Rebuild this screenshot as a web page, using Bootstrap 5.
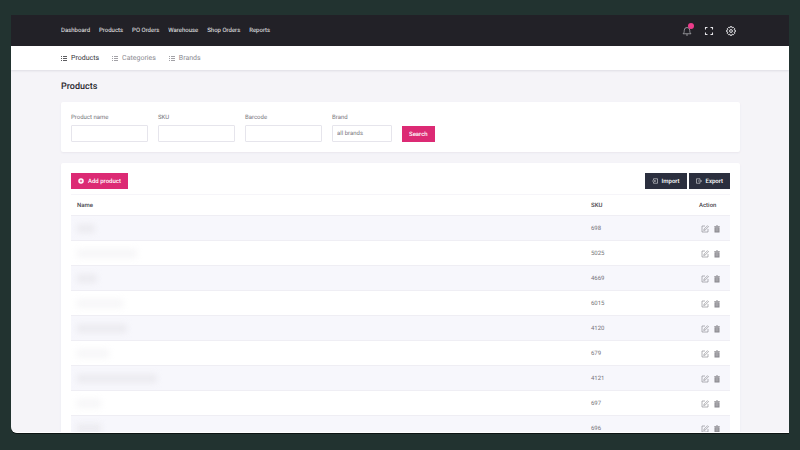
<!DOCTYPE html>
<html lang="en">
<head>
<meta charset="utf-8">
<meta name="viewport" content="width=device-width, initial-scale=1">
<title>Products</title>
<link href="https://cdn.jsdelivr.net/npm/bootstrap@5.3.0/dist/css/bootstrap.min.css" rel="stylesheet">
<style>
:root{--ink:#222127;--pink:#dc2a74;--slate:#2b2f3e;--line:#e6e5ec}
body{background:#223330;font-family:Roboto,"Liberation Sans",sans-serif;font-size:6px;line-height:12px;color:#77767c;padding:15px 11px 17px;text-rendering:geometricPrecision}
button,input,select{text-rendering:inherit}
.window{background:#f5f4f8;border-bottom:1px solid #fff;border-bottom-left-radius:6px;box-shadow:0 1px 0 #0c1413}
.gutter{padding-left:50px;padding-right:49px}
.topbar{background:var(--ink);height:31px;--bs-navbar-padding-y:0}
.topbar .nav{gap:9px;--bs-nav-link-font-size:6px}
.topbar .nav-link{padding:0;color:#f0f0f2;line-height:11px}
.tools{gap:12px;padding-right:4px}
.tools .btn{color:#e5e5e9;width:10px;height:10px}
.tools svg{width:10px;height:10px}
.btn{--bs-btn-padding-x:0;--bs-btn-padding-y:0;--bs-btn-border-width:0;--bs-btn-border-radius:0;--bs-btn-font-size:6px;--bs-btn-line-height:11px;--bs-btn-font-weight:500}
.dot{position:absolute;left:6px;top:-3px;width:6px;height:6px;background:#ec3c8b;border-radius:50%}
.subnav{height:24px;background:#fff;box-shadow:0 1px 2px #dddce4;gap:13px;--bs-nav-link-font-size:7px}
.subnav .nav-link{padding:0;gap:4px;color:#8b8a91;line-height:10px}
.subnav .nav-link.active{color:#343339}
.subnav svg{width:6px;height:6px}
.page-title{font-size:9px;line-height:12px;font-weight:500;color:#29282e;margin:11px 0 9px}
.panel{--bs-card-border-width:0;--bs-card-border-radius:2px;--bs-card-bg:#fff;box-shadow:0 1px 2px #e9e7ee;padding:10px}
.filters{gap:10px}
.field{width:77px}
.field.brand{width:60px}
.form-label{font-size:6px;line-height:12px;margin-bottom:1px}
.form-control,.form-select{height:17px;min-height:17px;font-size:6px;line-height:9px;padding:3px 4px;border:1px solid var(--line);border-radius:1px;background-image:none;color:#77767c}
.btn-pink{--bs-btn-bg:var(--pink);--bs-btn-color:#fff;--bs-btn-hover-bg:#c52065;--bs-btn-hover-color:#fff;height:16px;padding:0 7px}
.btn-slate{--bs-btn-bg:var(--slate);--bs-btn-color:#fff;--bs-btn-hover-bg:#1d202b;--bs-btn-hover-color:#fff;height:16px;padding:0 7px}
.btn-pink svg,.btn-slate svg{width:6px;height:6px}
.goods-panel{margin-top:11px}
.pair{gap:2px}
.goods{--bs-table-border-color:#efeef4;--bs-table-color:#77767c;--bs-table-striped-color:#77767c;--bs-table-striped-bg:#f7f7fc;table-layout:fixed;margin:5px 0 0;border-top:1px solid #f6f5f9}
.goods th{font-weight:500;color:#47464c;height:21px}
.goods td{height:25px}
.goods>:not(caption)>*>*{padding:0 6px;vertical-align:middle}
.goods>tbody>tr>td,.goods>thead>tr>th{padding-top:1px}
.goods .c-sku{width:108px}
.goods .c-act{width:37px}
.goods .acts{padding-left:2px;gap:4px}
.goods .btn{color:#8a898f;width:8px;height:8px}
.goods .btn svg{width:8px;height:8px}
.veil{height:9px;background:#e7e6eb;filter:blur(3px);opacity:.7}
.veil.faint{opacity:.35}
svg{display:block}
</style>
</head>
<body class="vh-100 d-flex flex-column overflow-hidden">
<svg class="d-none" aria-hidden="true">
<symbol id="list" viewBox="0 0 6 6"><path d="M0 1.500h1M2 1.500h4M0 3.500h1M2 3.500h4M0 5.500h1M2 5.500h4" stroke="currentColor" stroke-width=".8"/></symbol>
<symbol id="edit" viewBox="0 0 16 16"><path d="M8 2H2v12h12V8M5.500 11l.7-3L13 1.500l2 2L8.300 10z" fill="none" stroke="currentColor" stroke-width="1.300"/></symbol>
<symbol id="trash" viewBox="0 0 16 16"><path d="M3 4.500h10V15H3zM2.500 2H6V1h4v1h3.500v1.500h-11z" fill="currentColor"/><path d="M6 6v7M8 6v7M10 6v7" stroke="#fff" stroke-width=".5"/></symbol>
</svg>
<div class="window flex-fill d-flex flex-column overflow-hidden">
<nav class="navbar topbar gutter flex-shrink-0" aria-label="Main">
<div class="nav">
<a class="nav-link" href="#">Dashboard</a><a class="nav-link" href="#">Products</a><a class="nav-link" href="#">PO Orders</a><a class="nav-link" href="#">Warehouse</a><a class="nav-link" href="#">Shop Orders</a><a class="nav-link" href="#">Reports</a>
</div>
<div class="tools d-flex align-items-center">
<button class="btn d-flex position-relative" type="button" aria-label="Notifications"><svg viewBox="0 0 20 20" fill="none" stroke="#aaa9af" stroke-width="1.600"><path d="M2 15.500h16c-2-2-2.500-3-2.500-7a5.500 5.500 0 0 0-11 0c0 4-.5 5-2.500 7zM8 18h4"/></svg><span class="dot"></span></button>
<button class="btn d-flex" type="button" aria-label="Full screen"><svg viewBox="0 0 20 20" fill="none" stroke="currentColor" stroke-width="2.200"><path d="M7 3H3v4M13 3h4v4M17 13v4h-4M7 17H3v-4"/></svg></button>
<button class="btn d-flex" type="button" aria-label="Settings"><svg viewBox="0 0 20 20" fill="none" stroke="currentColor" stroke-width="2" stroke-linejoin="round"><path d="M8 1.500h4l.6 2.300 2.100-1.100 2.700 2.700-1.200 2 2.300.6v4l-2.300.6 1.200 2.100-2.700 2.700-2.100-1.200-.6 2.300H8l-.6-2.300-2.100 1.200-2.700-2.700 1.200-2.100L1.500 12V8l2.300-.6-1.200-2 2.700-2.700 2.100 1.100z"/><circle cx="10" cy="10" r="2.800"/></svg></button>
</div>
</nav>
<nav class="subnav nav gutter align-items-center flex-shrink-0" aria-label="Catalogue">
<a class="nav-link active d-flex align-items-center" href="#"><svg><use href="#list"/></svg>Products</a>
<a class="nav-link d-flex align-items-center" href="#"><svg><use href="#list"/></svg>Categories</a>
<a class="nav-link d-flex align-items-center" href="#"><svg><use href="#list"/></svg>Brands</a>
</nav>
<main class="gutter">
<h1 class="page-title">Products</h1>
<form class="card panel filters flex-row align-items-end">
<div class="field"><label class="form-label d-block" for="pname">Product name</label><input class="form-control" id="pname" type="text"></div>
<div class="field"><label class="form-label d-block" for="sku">SKU</label><input class="form-control" id="sku" type="text"></div>
<div class="field"><label class="form-label d-block" for="barcode">Barcode</label><input class="form-control" id="barcode" type="text"></div>
<div class="field brand"><label class="form-label d-block" for="brand">Brand</label><select class="form-select" id="brand"><option>all brands</option></select></div>
<button class="btn btn-pink" type="button">Search</button>
</form>
<section class="card panel goods-panel">
<div class="d-flex align-items-center">
<button class="btn btn-pink d-flex align-items-center gap-1 me-auto" type="button"><svg viewBox="0 0 12 12"><circle cx="6" cy="6" r="5.500" fill="#fff"/><path d="M6 3.500v5M3.500 6h5" stroke="#dc2a74" stroke-width="1.500"/></svg>Add product</button>
<div class="d-flex pair">
<button class="btn btn-slate d-flex align-items-center gap-1" type="button"><svg viewBox="0 0 12 12" fill="none" stroke="currentColor"><path d="M3 4V1.500h8v9H3V8M0 6h7M5 4l2 2-2 2"/></svg>Import</button>
<button class="btn btn-slate d-flex align-items-center gap-1" type="button"><svg viewBox="0 0 12 12" fill="none" stroke="currentColor"><path d="M8 4V1.500H1v9h7V8M4 6h7M9 4l2 2-2 2"/></svg>Export</button>
</div>
</div>
<table class="table table-striped goods">
<thead><tr><th scope="col">Name</th><th class="c-sku" scope="col">SKU</th><th class="c-act" scope="col">Action</th></tr></thead>
<tbody id="rows"></tbody>
</table>
</section>
</main>
</div>
<script>
const items=[["698",18],["5025",60],["4669",20],["6015",46],["4120",50],["679",32],["4121",80],["697",24],["696",24]];
document.getElementById("rows").innerHTML=items.map(([sku,w],i)=>`<tr><td><div class="veil${i%2?" faint":""}" style="width:${w}px"></div></td><td>${sku}</td><td><div class="acts d-flex"><button class="btn d-flex" type="button" aria-label="Edit ${sku}"><svg><use href="#edit"/></svg></button><button class="btn d-flex" type="button" aria-label="Delete ${sku}"><svg><use href="#trash"/></svg></button></div></td></tr>`).join("");
</script>
<script src="https://cdn.jsdelivr.net/npm/bootstrap@5.3.0/dist/js/bootstrap.bundle.min.js"></script>
</body>
</html>
